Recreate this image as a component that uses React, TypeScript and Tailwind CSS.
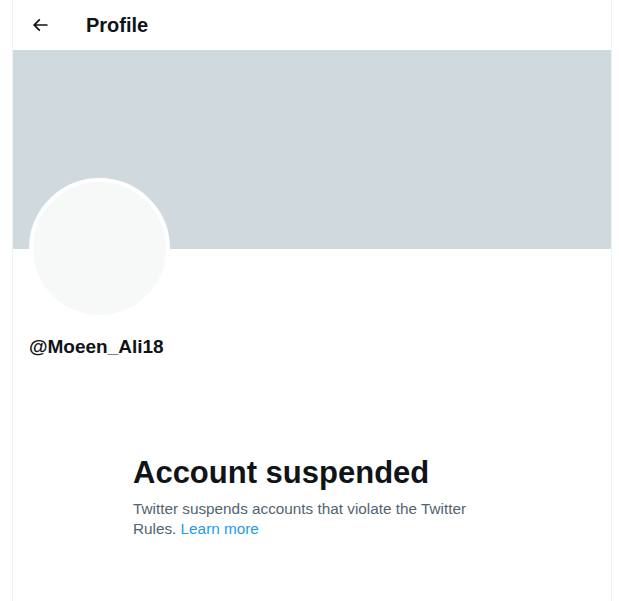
import React from "react";

export default function App() {
  return (
    <div
      className="min-h-[601px] w-[619px] bg-white"
      style={{ fontFamily: '"Liberation Sans", Arial, sans-serif' }}
    >
      <div className="ml-[12px] flex min-h-[601px] w-[600px] flex-col border-x border-[#eff3f4]">
        <div className="flex h-[50px] items-center">
          <div className="ml-[9px] flex h-[36px] w-[36px] items-center justify-center">
            <svg viewBox="0 0 24 24" className="h-[20px] w-[20px]" fill="#0f1419">
              <path d="M7.414 13l5.043 5.04-1.414 1.42L3.586 12l7.457-7.46 1.414 1.42L7.414 11H21v2H7.414z" />
            </svg>
          </div>
          <div className="ml-[28px] text-[20px] font-bold leading-[24px] text-[#0f1419]">Profile</div>
        </div>
        <div className="h-[199px] bg-[#cfd9de]" />
        <div className="px-[16px]">
          <div className="-mt-[71px] h-[141px] w-[141px] rounded-full border-[4px] border-white bg-[#f7f9f9]" />
          <div className="mt-[17px] text-[19px] font-bold leading-[22px] text-[#0f1419]">@Moeen_Ali18</div>
        </div>
        <div className="mt-[97px] pl-[120px]">
          <div className="max-w-[340px]">
            <div className="text-[31px] font-extrabold leading-[36px] text-[#0f1419]">Account suspended</div>
            <p className="mt-[8px] text-[15.3px] leading-[20px] text-[#536471]">
              Twitter suspends accounts that violate the Twitter Rules.{" "}
              <a className="text-[#1d9bf0]">Learn more</a>
            </p>
          </div>
        </div>
      </div>
    </div>
  );
}
